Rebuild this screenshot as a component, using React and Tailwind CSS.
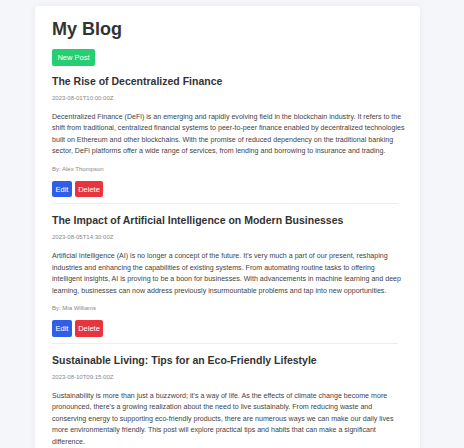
import { useState } from "react";

const initialPosts = [
  {
    id: 1,
    title: "The Rise of Decentralized Finance",
    date: "2023-08-01T10:00:00Z",
    content:
      "Decentralized Finance (DeFi) is an emerging and rapidly evolving field in the blockchain industry. It refers to the shift from traditional, centralized financial systems to peer-to-peer finance enabled by decentralized technologies built on Ethereum and other blockchains. With the promise of reduced dependency on the traditional banking sector, DeFi platforms offer a wide range of services, from lending and borrowing to insurance and trading.",
    author: "Alex Thompson",
  },
  {
    id: 2,
    title: "The Impact of Artificial Intelligence on Modern Businesses",
    date: "2023-08-05T14:30:00Z",
    content:
      "Artificial Intelligence (AI) is no longer a concept of the future. It's very much a part of our present, reshaping industries and enhancing the capabilities of existing systems. From automating routine tasks to offering intelligent insights, AI is proving to be a boon for businesses. With advancements in machine learning and deep learning, businesses can now address previously insurmountable problems and tap into new opportunities.",
    author: "Mia Williams",
  },
  {
    id: 3,
    title: "Sustainable Living: Tips for an Eco-Friendly Lifestyle",
    date: "2023-08-10T09:15:00Z",
    content:
      "Sustainability is more than just a buzzword; it's a way of life. As the effects of climate change become more pronounced, there's a growing realization about the need to live sustainably. From reducing waste and conserving energy to supporting eco-friendly products, there are numerous ways we can make our daily lives more environmentally friendly. This post will explore practical tips and habits that can make a significant difference.",
    author: "Sophia Martinez",
  },
];

function Post({ post, onDelete }) {
  return (
    <div className="border-b border-[#eeeeee] pb-[6px] mb-[9px] mr-[8px]">
      <h2 className="text-[10.5px] leading-[14px] font-bold text-[#333333]">{post.title}</h2>
      <p className="mt-[6px] text-[6px] leading-[9px] text-[#888888]">{post.date}</p>
      <p className="mt-[9px] -mr-[8px] text-[7.1px] leading-[11.5px] text-[#444444]">{post.content}</p>
      <p className="mt-[7px] text-[6px] leading-[9px] text-[#888888]">By: {post.author}</p>
      <div className="mt-[7px] flex gap-[3px]">
        <button className="h-[16.5px] w-[20px] rounded-[2px] bg-[#2d5fe9] text-[7.5px] text-white">
          Edit
        </button>
        <button
          onClick={() => onDelete(post.id)}
          className="h-[16.5px] w-[28px] rounded-[2px] bg-[#e8343f] text-[7.5px] text-white"
        >
          Delete
        </button>
      </div>
    </div>
  );
}

export default function App() {
  const [posts, setPosts] = useState(initialPosts);

  return (
    <div className="h-[448px] overflow-hidden bg-[#f5f6fa] pt-[6px] pl-[35px] font-['Liberation_Sans',Arial,sans-serif]">
      <div className="w-[385px] rounded-[3px] bg-white pl-[17px] pr-[14px] pt-[12px] shadow-[0_0_6px_rgba(0,0,0,0.06)]">
        <h1 className="text-[18px] leading-[22px] font-bold text-[#333333]">My Blog</h1>
        <button className="mt-[9px] h-[17px] w-[43px] rounded-[2px] bg-[#24cf72] text-[7.5px] text-white">
          New Post
        </button>
        <div className="mt-[7px]">
          {posts.map((post) => (
            <Post
              key={post.id}
              post={post}
              onDelete={(id) => setPosts(posts.filter((p) => p.id !== id))}
            />
          ))}
        </div>
      </div>
    </div>
  );
}
